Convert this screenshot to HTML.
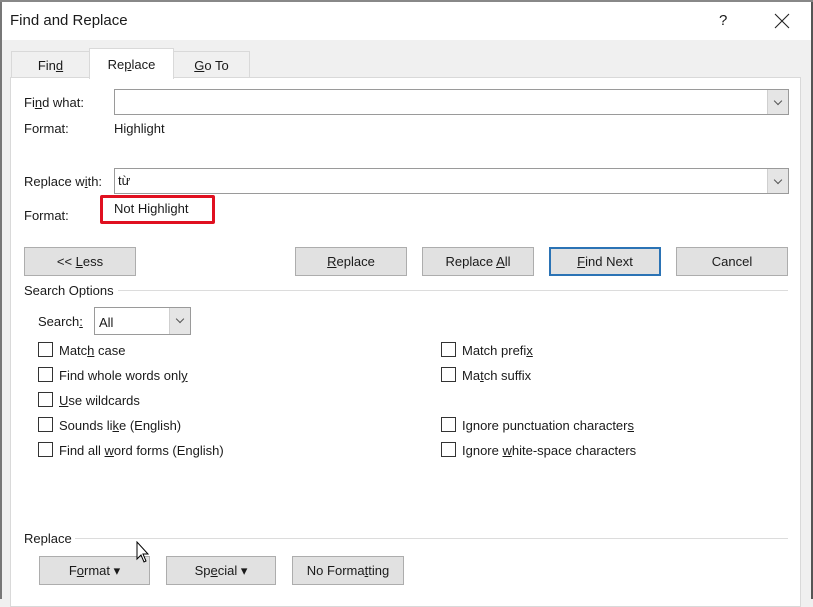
<!DOCTYPE html>
<html><head><meta charset="utf-8"><style>
*{box-sizing:border-box;margin:0;padding:0}
body{width:813px;height:599px;overflow:hidden;background:#f0f0f0;font-family:"Liberation Sans",sans-serif;font-size:13px;color:#1a1a1a;position:relative}
.a{position:absolute}
u{text-decoration:underline}
.btn{position:absolute;height:29px;background:#e1e1e1;border:1px solid #adadad;text-align:center;line-height:27px}
.inp{position:absolute;height:26px;background:#fff;border:1px solid #9a9a9a}
.dd{position:absolute;right:0;top:0;width:21px;height:24px;background:#e5e5e5;border-left:1px solid #cfcfcf}
.dd:after{content:"";position:absolute;left:7px;top:8px;width:5px;height:5px;border-right:1px solid #555;border-bottom:1px solid #555;transform:rotate(45deg)}
.cb{position:absolute;width:15px;height:15px;border:1px solid #333;background:#fff}
.tab{position:absolute;background:#f0f0f0;border:1px solid #d9d9d9;border-bottom:none;text-align:center}
.line{position:absolute;height:1px;background:#dcdcdc}
</style></head><body>
<div class="a" style="left:0;top:0;width:813px;height:40px;background:#fff"></div>
<div class="a" style="left:0;top:0;width:2px;height:599px;background:#777"></div>
<div class="a" style="left:811px;top:0;width:2px;height:599px;background:#555"></div>
<div class="a" style="left:0;top:0;width:813px;height:2px;background:#888"></div>
<div class="a" style="left:10px;top:12px;font-size:15px">Find and Replace</div>
<div class="a" style="left:719px;top:12px;font-size:15px">?</div>
<svg class="a" style="left:774px;top:13px" width="16" height="16" viewBox="0 0 16 16"><path d="M1 1 L15 15 M15 1 L1 15" stroke="#222" stroke-width="1.1" fill="none"/></svg>

<div class="tab" style="left:11px;top:51px;width:79px;height:27px;line-height:28px">Fin<u>d</u></div>
<div class="tab" style="left:173px;top:51px;width:77px;height:27px;line-height:28px"><u>G</u>o To</div>
<div class="a" style="left:10px;top:77px;width:791px;height:530px;background:#fff;border:1px solid #d9d9d9"></div>
<div class="tab" style="left:89px;top:48px;width:85px;height:31px;background:#fff;line-height:32px">Re<u>p</u>lace</div>

<div class="a" style="left:24px;top:95px">Fi<u>n</u>d what:</div>
<div class="inp" style="left:114px;top:89px;width:675px"><div class="dd"></div></div>
<div class="a" style="left:24px;top:121px">Format:</div>
<div class="a" style="left:114px;top:121px">Highlight</div>

<div class="a" style="left:24px;top:174px">Replace w<u>i</u>th:</div>
<div class="inp" style="left:114px;top:168px;width:675px"><div class="a" style="left:3px;top:4px">từ</div><div class="dd"></div></div>
<div class="a" style="left:24px;top:208px">Format:</div>
<div class="a" style="left:100px;top:195px;width:115px;height:29px;border:3px solid #e01020;border-radius:2px"></div>
<div class="a" style="left:114px;top:201px">Not Highlight</div>

<div class="btn" style="left:24px;top:247px;width:112px">&lt;&lt; <u>L</u>ess</div>
<div class="btn" style="left:295px;top:247px;width:112px"><u>R</u>eplace</div>
<div class="btn" style="left:422px;top:247px;width:112px">Replace <u>A</u>ll</div>
<div class="btn" style="left:549px;top:247px;width:112px;border:2px solid #2b73b5;line-height:25px"><u>F</u>ind Next</div>
<div class="btn" style="left:676px;top:247px;width:112px">Cancel</div>

<div class="a" style="left:24px;top:283px">Search Options</div>
<div class="line" style="left:118px;top:290px;width:670px"></div>
<div class="a" style="left:38px;top:314px">Search<u>:</u></div>
<div class="inp" style="left:94px;top:307px;width:97px;height:28px"><div class="a" style="left:4px;top:7px">All</div><div class="dd" style="height:26px"></div></div>

<div class="cb" style="left:38px;top:342px"></div><div class="a" style="left:59px;top:343px">Matc<u>h</u> case</div>
<div class="cb" style="left:38px;top:367px"></div><div class="a" style="left:59px;top:368px">Find whole words onl<u>y</u></div>
<div class="cb" style="left:38px;top:392px"></div><div class="a" style="left:59px;top:393px"><u>U</u>se wildcards</div>
<div class="cb" style="left:38px;top:417px"></div><div class="a" style="left:59px;top:418px">Sounds li<u>k</u>e (English)</div>
<div class="cb" style="left:38px;top:442px"></div><div class="a" style="left:59px;top:443px">Find all <u>w</u>ord forms (English)</div>

<div class="cb" style="left:441px;top:342px"></div><div class="a" style="left:462px;top:343px">Match prefi<u>x</u></div>
<div class="cb" style="left:441px;top:367px"></div><div class="a" style="left:462px;top:368px">Ma<u>t</u>ch suffix</div>
<div class="cb" style="left:441px;top:417px"></div><div class="a" style="left:462px;top:418px">Ignore punctuation character<u>s</u></div>
<div class="cb" style="left:441px;top:442px"></div><div class="a" style="left:462px;top:443px">Ignore <u>w</u>hite-space characters</div>

<div class="a" style="left:24px;top:531px">Replace</div>
<div class="line" style="left:75px;top:538px;width:713px"></div>
<div class="btn" style="left:39px;top:556px;width:111px">F<u>o</u>rmat ▾</div>
<div class="btn" style="left:166px;top:556px;width:110px">Sp<u>e</u>cial ▾</div>
<div class="btn" style="left:292px;top:556px;width:112px">No Forma<u>t</u>ting</div>

<svg class="a" style="left:136px;top:541px" width="16" height="26" viewBox="0 0 16 26"><path d="M1 1 L1 18 L5 14 L8 21 L10 20 L7 13 L12 13 Z" fill="#fff" stroke="#000" stroke-width="1"/></svg>
</body></html>
